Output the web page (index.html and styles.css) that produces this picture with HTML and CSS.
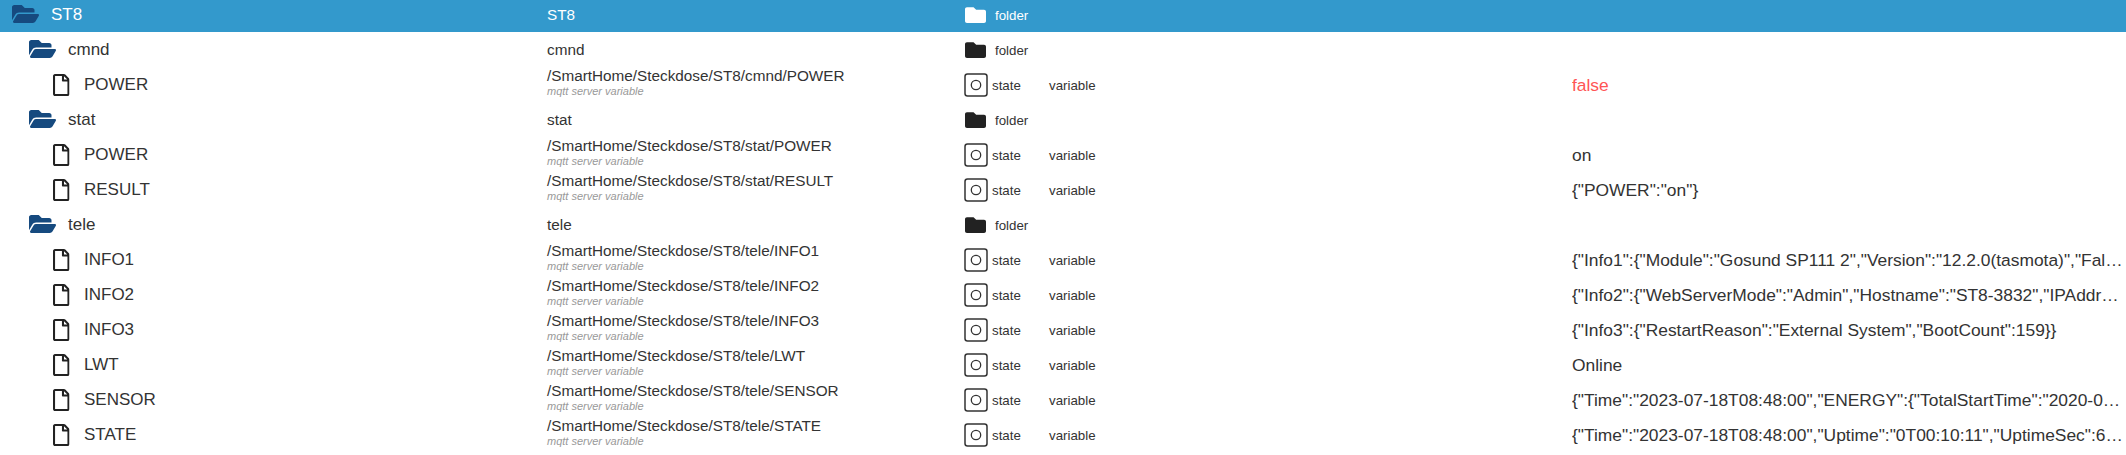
FILE: index.html
```html
<!DOCTYPE html>
<html lang="en">
<head>
    <meta charset="UTF-8">
    <title>Objects</title>
    <link rel="stylesheet" href="styles.css">
</head>
<body>
    <svg class="defs" width="0" height="0">
        <symbol id="folder-open" viewBox="0 0 576 512">
            <path d="M572.694 292.093L500.27 416.248A63.997 63.997 0 0 1 444.989 448H45.025c-18.523 0-30.064-20.093-20.731-36.093l72.424-124.155A64 64 0 0 1 152 256h399.964c18.523 0 30.064 20.093 20.73 36.093zM152 224h328v-48c0-26.51-21.49-48-48-48H272l-64-64H48C21.49 64 0 85.49 0 112v278.046l69.077-118.418C86.214 242.25 118.112 224 152 224z"/>
        </symbol>
        <symbol id="folder" viewBox="0 0 512 512">
            <path d="M464 128H272l-64-64H48C21.49 64 0 85.49 0 112v288c0 26.51 21.49 48 48 48h416c26.51 0 48-21.49 48-48V176c0-26.51-21.49-48-48-48z"/>
        </symbol>
        <symbol id="file" viewBox="0 0 384 512">
            <path d="M369.9 97.9L286 14C277 5 264.8-.1 252.1-.1H48C21.5 0 0 21.5 0 48v416c0 26.5 21.5 48 48 48h288c26.5 0 48-21.5 48-48V131.9c0-12.7-5.1-25-14.1-34zM332.1 128H256V51.9l76.1 76.1zM48 464V48h160v104c0 13.3 10.7 24 24 24h104v288H48z"/>
        </symbol>
        <symbol id="state" viewBox="0 0 24 24">
            <rect x="1" y="1" width="22" height="22" rx="2.5" fill="none" stroke="currentColor" stroke-width="1.5"/>
            <circle cx="12" cy="12" r="4.7" fill="none" stroke="currentColor" stroke-width="1.3"/>
        </symbol>
    </svg>

    <div class="tree">
        <div class="row selected">
            <div class="col-name lvl-0"><svg class="ico-open"><use href="#folder-open"/></svg><span>ST8</span></div>
            <div class="col-id"><div class="path">ST8</div></div>
            <div class="col-type"><svg class="ico-folder"><use href="#folder"/></svg><span class="folder-label">folder</span></div>
        </div>
        <div class="row">
            <div class="col-name lvl-1"><svg class="ico-open"><use href="#folder-open"/></svg><span>cmnd</span></div>
            <div class="col-id"><div class="path">cmnd</div></div>
            <div class="col-type"><svg class="ico-folder"><use href="#folder"/></svg><span class="folder-label">folder</span></div>
        </div>
        <div class="row">
            <div class="col-name lvl-2"><svg class="ico-file"><use href="#file"/></svg><span>POWER</span></div>
            <div class="col-id"><div class="path">/SmartHome/Steckdose/ST8/cmnd/POWER</div><div class="sub">mqtt server variable</div></div>
            <div class="col-type"><svg class="ico-state"><use href="#state"/></svg><span class="state-label">state</span><span>variable</span></div>
            <div class="col-value red">false</div>
        </div>
        <div class="row">
            <div class="col-name lvl-1"><svg class="ico-open"><use href="#folder-open"/></svg><span>stat</span></div>
            <div class="col-id"><div class="path">stat</div></div>
            <div class="col-type"><svg class="ico-folder"><use href="#folder"/></svg><span class="folder-label">folder</span></div>
        </div>
        <div class="row">
            <div class="col-name lvl-2"><svg class="ico-file"><use href="#file"/></svg><span>POWER</span></div>
            <div class="col-id"><div class="path">/SmartHome/Steckdose/ST8/stat/POWER</div><div class="sub">mqtt server variable</div></div>
            <div class="col-type"><svg class="ico-state"><use href="#state"/></svg><span class="state-label">state</span><span>variable</span></div>
            <div class="col-value">on</div>
        </div>
        <div class="row">
            <div class="col-name lvl-2"><svg class="ico-file"><use href="#file"/></svg><span>RESULT</span></div>
            <div class="col-id"><div class="path">/SmartHome/Steckdose/ST8/stat/RESULT</div><div class="sub">mqtt server variable</div></div>
            <div class="col-type"><svg class="ico-state"><use href="#state"/></svg><span class="state-label">state</span><span>variable</span></div>
            <div class="col-value">{"POWER":"on"}</div>
        </div>
        <div class="row">
            <div class="col-name lvl-1"><svg class="ico-open"><use href="#folder-open"/></svg><span>tele</span></div>
            <div class="col-id"><div class="path">tele</div></div>
            <div class="col-type"><svg class="ico-folder"><use href="#folder"/></svg><span class="folder-label">folder</span></div>
        </div>
        <div class="row">
            <div class="col-name lvl-2"><svg class="ico-file"><use href="#file"/></svg><span>INFO1</span></div>
            <div class="col-id"><div class="path">/SmartHome/Steckdose/ST8/tele/INFO1</div><div class="sub">mqtt server variable</div></div>
            <div class="col-type"><svg class="ico-state"><use href="#state"/></svg><span class="state-label">state</span><span>variable</span></div>
            <div class="col-value">{"Info1":{"Module":"Gosund SP111 2","Version":"12.2.0(tasmota)","Fal…</div>
        </div>
        <div class="row">
            <div class="col-name lvl-2"><svg class="ico-file"><use href="#file"/></svg><span>INFO2</span></div>
            <div class="col-id"><div class="path">/SmartHome/Steckdose/ST8/tele/INFO2</div><div class="sub">mqtt server variable</div></div>
            <div class="col-type"><svg class="ico-state"><use href="#state"/></svg><span class="state-label">state</span><span>variable</span></div>
            <div class="col-value">{"Info2":{"WebServerMode":"Admin","Hostname":"ST8-3832","IPAddr…</div>
        </div>
        <div class="row">
            <div class="col-name lvl-2"><svg class="ico-file"><use href="#file"/></svg><span>INFO3</span></div>
            <div class="col-id"><div class="path">/SmartHome/Steckdose/ST8/tele/INFO3</div><div class="sub">mqtt server variable</div></div>
            <div class="col-type"><svg class="ico-state"><use href="#state"/></svg><span class="state-label">state</span><span>variable</span></div>
            <div class="col-value">{"Info3":{"RestartReason":"External System","BootCount":159}}</div>
        </div>
        <div class="row">
            <div class="col-name lvl-2"><svg class="ico-file"><use href="#file"/></svg><span>LWT</span></div>
            <div class="col-id"><div class="path">/SmartHome/Steckdose/ST8/tele/LWT</div><div class="sub">mqtt server variable</div></div>
            <div class="col-type"><svg class="ico-state"><use href="#state"/></svg><span class="state-label">state</span><span>variable</span></div>
            <div class="col-value">Online</div>
        </div>
        <div class="row">
            <div class="col-name lvl-2"><svg class="ico-file"><use href="#file"/></svg><span>SENSOR</span></div>
            <div class="col-id"><div class="path">/SmartHome/Steckdose/ST8/tele/SENSOR</div><div class="sub">mqtt server variable</div></div>
            <div class="col-type"><svg class="ico-state"><use href="#state"/></svg><span class="state-label">state</span><span>variable</span></div>
            <div class="col-value">{"Time":"2023-07-18T08:48:00","ENERGY":{"TotalStartTime":"2020-0…</div>
        </div>
        <div class="row">
            <div class="col-name lvl-2"><svg class="ico-file"><use href="#file"/></svg><span>STATE</span></div>
            <div class="col-id"><div class="path">/SmartHome/Steckdose/ST8/tele/STATE</div><div class="sub">mqtt server variable</div></div>
            <div class="col-type"><svg class="ico-state"><use href="#state"/></svg><span class="state-label">state</span><span>variable</span></div>
            <div class="col-value">{"Time":"2023-07-18T08:48:00","Uptime":"0T00:10:11","UptimeSec":6…</div>
        </div>
    </div>
</body>
</html>
```

FILE: styles.css
```css
* {
    margin: 0;
    padding: 0;
    box-sizing: border-box;
}

html, body {
    height: 455px;
    overflow: hidden;
}

body {
    font-family: "Liberation Sans", Arial, sans-serif;
    background: #ffffff;
    color: #333333;
}

.defs {
    display: block;
    height: 0;
}

.tree {
    margin-top: -2px;
}

.row {
    display: flex;
    align-items: center;
    height: 35px;
    padding-top: 1px;
}

.row.selected {
    background: #3399cc;
    color: #ffffff;
    height: 34px;
    padding-top: 0;
}

.col-name {
    display: flex;
    align-items: center;
    width: 547px;
    font-size: 17px;
    flex-shrink: 0;
}

.lvl-0 { padding-left: 12px; }
.lvl-1 { padding-left: 29px; }
.lvl-2 { padding-left: 53px; }

.ico-open {
    width: 27px;
    height: 24px;
    margin-right: 12px;
    margin-bottom: 3px;
    fill: #164a7f;
}

.ico-file {
    width: 16.5px;
    height: 22px;
    margin-right: 14.5px;
    fill: #222222;
}

.col-id {
    width: 416px;
    flex-shrink: 0;
}

.path {
    font-size: 15.3px;
    line-height: 15px;
    margin-bottom: 2px;
}

.sub {
    font-size: 11px;
    font-style: italic;
    line-height: 12px;
    margin-bottom: 6px;
    color: #999999;
}

.col-type {
    display: flex;
    align-items: center;
    width: 609px;
    font-size: 13.3px;
    flex-shrink: 0;
}

.ico-folder {
    width: 21px;
    height: 22px;
    margin-left: 2px;
    margin-right: 9px;
    fill: #222222;
}

.selected .ico-folder {
    fill: #ffffff;
}

.ico-state {
    width: 24px;
    height: 24px;
    margin-left: 1px;
    margin-right: 4px;
    color: #333333;
}

.state-label {
    width: 57px;
}

.col-value {
    flex: 1;
    min-width: 0;
    font-size: 17.4px;
    white-space: nowrap;
    overflow: hidden;
}

.red {
    color: #ff5555;
}
```
